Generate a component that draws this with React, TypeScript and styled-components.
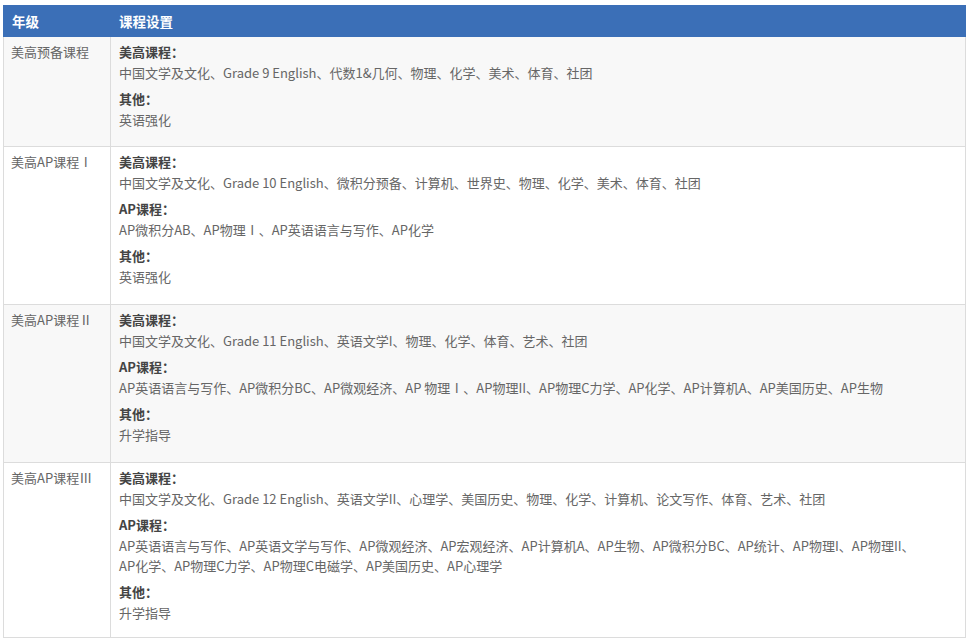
import React from "react";
import styled, { createGlobalStyle } from "styled-components";

const GlobalStyle = createGlobalStyle`
  html, body {
    margin: 0;
    padding: 0;
    background: #ffffff;
  }
  body {
    font-family: "Noto Sans CJK SC", "Microsoft YaHei", "Noto Sans", sans-serif;
  }
`;

const Page = styled.div`
  padding: 5px 3px 0 3px;
`;

const Table = styled.table`
  width: 963px;
  border-collapse: collapse;
  table-layout: fixed;
  font-size: 13px;
  color: #666;
`;

const HeadCell = styled.th`
  height: 30px;
  padding: 0 8px;
  background: #3b6fb7;
  color: #fff;
  font-weight: bold;
  font-size: 13.5px;
  text-align: left;
  border: 1px solid #3b6fb7;
  & + & {
    border-left: 1px solid #86a6d6;
  }
`;

const Row = styled.tr<{ $shaded: boolean }>`
  background: ${p => (p.$shaded ? "#f8f8f8" : "#ffffff")};
`;

const GradeCell = styled.td`
  vertical-align: top;
  padding: 4px 7px 0 7px;
  line-height: 22px;
  border: 1px solid #dcdcdc;
  color: #666;
`;

const CourseCell = styled.td<{ $h: number }>`
  vertical-align: top;
  height: ${p => p.$h}px;
  padding: 4px 46px 0 8px;
  border: 1px solid #dcdcdc;
  box-sizing: border-box;
`;

const Section = styled.div`
  margin-bottom: 5px;
`;

const Label = styled.div`
  font-weight: bold;
  color: #444;
  line-height: 22px;
`;

const Items = styled.div`
  line-height: 20px;
  color: #666;
`;

interface ISection {
  title: string;
  text: string;
}

interface IGrade {
  name: string;
  height: number;
  sections: ISection[];
}

const grades: IGrade[] = [
  {
    name: "美高预备课程",
    height: 110,
    sections: [
      { title: "美高课程：", text: "中国文学及文化、Grade 9 English、代数1&几何、物理、化学、美术、体育、社团" },
      { title: "其他：", text: "英语强化" },
    ],
  },
  {
    name: "美高AP课程Ⅰ",
    height: 158,
    sections: [
      { title: "美高课程：", text: "中国文学及文化、Grade 10 English、微积分预备、计算机、世界史、物理、化学、美术、体育、社团" },
      { title: "AP课程：", text: "AP微积分AB、AP物理Ⅰ、AP英语语言与写作、AP化学" },
      { title: "其他：", text: "英语强化" },
    ],
  },
  {
    name: "美高AP课程Ⅱ",
    height: 158,
    sections: [
      { title: "美高课程：", text: "中国文学及文化、Grade 11 English、英语文学I、物理、化学、体育、艺术、社团" },
      { title: "AP课程：", text: "AP英语语言与写作、AP微积分BC、AP微观经济、AP 物理Ⅰ、AP物理II、AP物理C力学、AP化学、AP计算机A、AP美国历史、AP生物" },
      { title: "其他：", text: "升学指导" },
    ],
  },
  {
    name: "美高AP课程Ⅲ",
    height: 175,
    sections: [
      { title: "美高课程：", text: "中国文学及文化、Grade 12 English、英语文学II、心理学、美国历史、物理、化学、计算机、论文写作、体育、艺术、社团" },
      { title: "AP课程：", text: "AP英语语言与写作、AP英语文学与写作、AP微观经济、AP宏观经济、AP计算机A、AP生物、AP微积分BC、AP统计、AP物理I、AP物理II、AP化学、AP物理C力学、AP物理C电磁学、AP美国历史、AP心理学" },
      { title: "其他：", text: "升学指导" },
    ],
  },
];

function App() {
  return (
    <Page>
      <GlobalStyle />
      <Table>
        <colgroup>
          <col style={{ width: 107 }} />
          <col />
        </colgroup>
        <thead>
          <tr>
            <HeadCell>年级</HeadCell>
            <HeadCell>课程设置</HeadCell>
          </tr>
        </thead>
        <tbody>
          {grades.map((g, i) => (
            <Row key={g.name} $shaded={i % 2 === 0}>
              <GradeCell>{g.name}</GradeCell>
              <CourseCell $h={g.height}>
                {g.sections.map(s => (
                  <Section key={s.title}>
                    <Label>{s.title}</Label>
                    <Items>{s.text}</Items>
                  </Section>
                ))}
              </CourseCell>
            </Row>
          ))}
        </tbody>
      </Table>
    </Page>
  );
}

export default App;
